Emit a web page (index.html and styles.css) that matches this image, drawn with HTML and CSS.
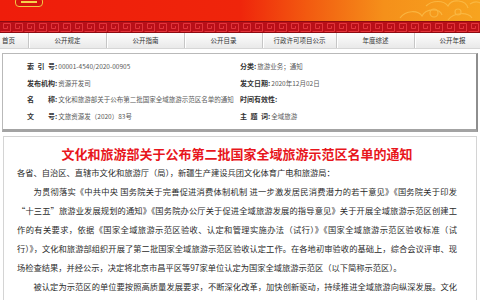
FILE: index.html
```html
<!DOCTYPE html>
<html lang="zh-CN">
<head>
  <meta charset="UTF-8" />
  <meta name="viewport" content="width=device-width, initial-scale=1.0" />
  <title>文化和旅游部关于公布第二批国家全域旅游示范区名单的通知</title>
  <link rel="stylesheet" href="styles.css">
</head>
<body>
  <div class="header">
    <div class="banner">
      <div class="logo"><span></span></div>
      <svg class="clouds" width="150" height="21" viewBox="0 0 150 21">
        <g fill="none" stroke="#fbbd4a" stroke-width="1.2" opacity="0.8">
          <path d="M70 18 C76 10 88 10 92 16 C96 8 110 8 112 15" />
          <path d="M96 6 C102 0 114 0 118 6 C122 -2 136 0 138 8" />
          <path d="M118 20 C124 12 138 12 142 18" />
          <circle cx="104" cy="13" r="4" />
          <circle cx="128" cy="12" r="3" />
          <path d="M140 4 C146 0 152 2 154 8" />
        </g>
      </svg>
    </div>
    <svg class="fret" width="100%" height="12">
      <defs>
        <pattern id="key" width="12" height="12" patternUnits="userSpaceOnUse">
          <path d="M0.5 10.5 H10.5 V2.5 H3.5 V7.5 H7.5 V5" fill="none" stroke="#e2353c" stroke-width="1" />
        </pattern>
      </defs>
      <rect width="100%" height="12" fill="#b90f18" />
      <rect width="100%" height="12" fill="url(#key)" />
      <rect width="100%" height="1" fill="#8c0a10" />
      <rect y="11" width="100%" height="1" fill="#8c0a10" />
    </svg>
    <ul class="nav">
      <li class="home">首页</li>
      <li>公开规定</li>
      <li>公开指南</li>
      <li>公开目录</li>
      <li class="narrow">行政许可项目公示</li>
      <li>年度综述</li>
      <li class="last">公开年报</li>
    </ul>
  </div>

  <div class="info">
    <div class="field"><span class="k fit">索引号</span>:<span class="v">00001-4540/2020-00905</span></div>
    <div class="field"><span class="k">分类</span>:<span class="v">旅游业务；通知</span></div>
    <div class="field"><span class="k fit">发布机构</span>:<span class="v">资源开发司</span></div>
    <div class="field"><span class="k">发文日期</span>:<span class="v">2020年12月02日</span></div>
    <div class="field"><span class="k fit">名称</span>:<span class="v">文化和旅游部关于公布第二批国家全域旅游示范区名单的通知</span></div>
    <div class="field"><span class="k">时间有效性</span>:<span class="v"></span></div>
    <div class="field"><span class="k fit">文号</span>:<span class="v">文旅资源发（2020）83号</span></div>
    <div class="field"><span class="k fit">主题词</span>:<span class="v">全域旅游</span></div>
  </div>

  <div class="article">
    <h1>文化和旅游部关于公布第二批国家全域旅游示范区名单的通知</h1>
    <p class="to">各省、自治区、直辖市文化和旅游厅（局），新疆生产建设兵团文化体育广电和旅游局：</p>
    <p>为贯彻落实《中共中央 国务院关于完善促进消费体制机制 进一步激发居民消费潜力的若干意见》《国务院关于印发“十三五”旅游业发展规划的通知》《国务院办公厅关于促进全域旅游发展的指导意见》关于开展全域旅游示范区创建工作的有关要求，依据《国家全域旅游示范区验收、认定和管理实施办法（试行）》《国家全域旅游示范区验收标准（试行）》，文化和旅游部组织开展了第二批国家全域旅游示范区验收认定工作。在各地初审验收的基础上，综合会议评审、现场检查结果，并经公示，决定将北京市昌平区等97家单位认定为国家全域旅游示范区（以下简称示范区）。</p>
    <p class="tight">被认定为示范区的单位要按照高质量发展要求，不断深化改革，加快创新驱动，持续推进全域旅游向纵深发展。文化和旅游部将实施“有进有出”的管理机制，适时开展示范区复核工作。省级文化和旅游行政部门要做好辖区内示范区的日常管理工作，发挥示范区的引领带动作用。</p>
  </div>
</body>
</html>
```

FILE: styles.css
```css
* {
  box-sizing: border-box;
  margin: 0;
  padding: 0;
}

body {
  font-family: "Noto Sans CJK SC", sans-serif;
  color: #2b2b2b;
  background: #fff;
  width: 480px;
  overflow: hidden;
}

.banner {
  display: flex;
  height: 21px;
  overflow: hidden;
  background: linear-gradient(to right, #ef1d0b 0%, #ef250b 50%, #f25a10 64%, #f5901a 80%, #f7a41f 100%);
}

.logo {
  width: 28px;
  height: 10px;
  margin: -3px 0 0 15px;
  border: 1px solid #f5c743;
  border-radius: 4px;
  background: #d5150e;
  display: flex;
  align-items: center;
  justify-content: center;
}

.logo span {
  width: 16px;
  height: 2px;
  background: #f8d24a;
}

.clouds {
  margin-left: auto;
  display: block;
}

.fret {
  display: block;
}

.nav {
  list-style: none;
  display: flex;
  height: 16px;
  background: linear-gradient(#fdfdfd, #e9e9e9);
  border-bottom: 1px solid #d6d6d6;
  white-space: nowrap;
}

.nav li {
  flex: none;
  width: 78px;
  font-size: 6.5px;
  line-height: 15px;
  text-align: center;
  color: #333;
  border-left: 1px solid #c6c6c6;
  box-shadow: inset 1px 0 #fff;
}

.nav .home {
  width: 28px;
  text-align: left;
  padding-left: 2px;
  border-left: none;
  box-shadow: none;
}

.nav .narrow {
  width: 74px;
}

.nav .last {
  width: 76px;
}

.info {
  margin: 4px 2px 0;
  padding: 4px 0 5px 24px;
  border: 1px solid #b9b9b9;
  border-right: 2px solid #8e8e8e;
  border-bottom: 3px solid #a3a3a3;
  display: grid;
  grid-template-columns: 213px 1fr;
  grid-auto-rows: 16.5px;
  align-items: center;
}

.field {
  font-size: 7px;
  font-weight: bold;
  color: #333;
  white-space: nowrap;
}

.k {
  display: inline-block;
}

.k.fit {
  width: 28px;
  text-align: justify;
  text-align-last: justify;
}

.v {
  font-size: 6.5px;
  font-weight: normal;
  color: #5a5a5a;
  margin-left: 1px;
}

.article {
  margin: 4px 3px 0;
  padding: 8px 19px 0 13px;
  border: 1px solid #d4d4d4;
  height: 200px;
}

.article h1 {
  font-size: 13px;
  line-height: 18px;
  color: #e8161c;
  text-align: center;
}

.article p {
  font-size: 8.25px;
  line-height: 19px;
  text-align: justify;
  text-indent: 2em;
}

.article p.to {
  text-indent: 0;
}

.article p.tight {
  letter-spacing: -0.06px;
}
```
